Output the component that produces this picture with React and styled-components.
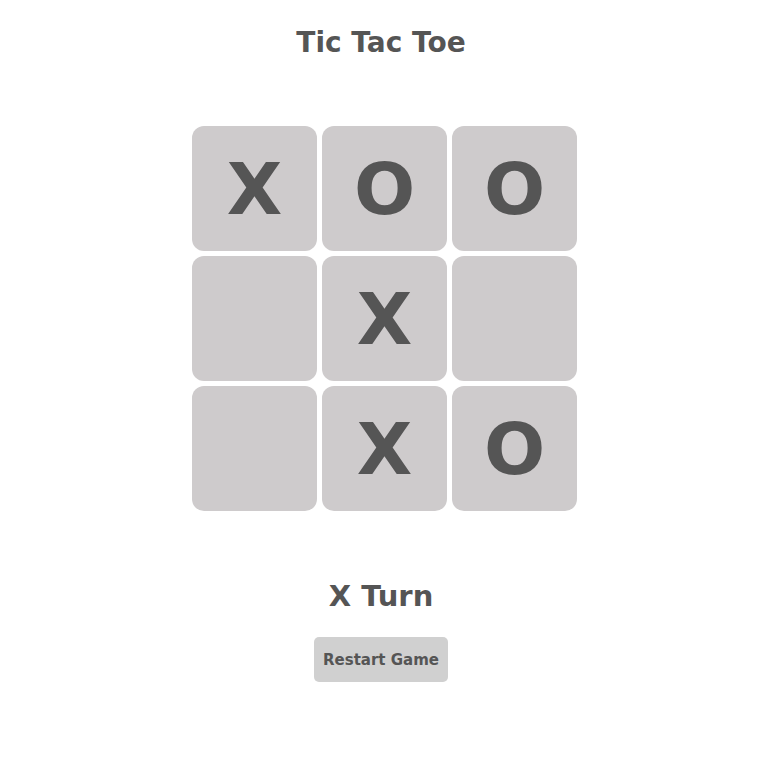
import styled, { createGlobalStyle } from 'styled-components';

const GlobalStyle = createGlobalStyle`
  body {
    margin: 0;
    background: #ffffff;
    font-family: 'DejaVu Sans', 'Liberation Sans', sans-serif;
    color: #555555;
  }
`;

const Page = styled.div`
  display: flex;
  flex-direction: column;
  align-items: center;
  padding: 24px 15px 0 0;
  width: 777px;
  box-sizing: border-box;
`;

const Title = styled.h1`
  margin: 0;
  font-size: 28px;
  font-weight: 700;
  line-height: 38px;
`;

const Board = styled.div`
  display: grid;
  grid-template-columns: repeat(3, 125px);
  grid-auto-rows: 125px;
  gap: 5px;
  margin: 64px 0 0 7px;
`;

const Cell = styled.button`
  border: none;
  padding: 0;
  border-radius: 12px;
  background: #cecbcc;
  color: #555555;
  font-family: 'DejaVu Sans', sans-serif;
  font-weight: 700;
  font-size: 72px;
  line-height: 1;
  display: flex;
  align-items: center;
  justify-content: center;
  cursor: pointer;
`;

const Status = styled.h2`
  margin: 66px 0 0;
  font-size: 29px;
  font-weight: 700;
  line-height: 38px;
`;

const RestartButton = styled.button`
  margin-top: 22px;
  width: 134px;
  height: 45px;
  border: none;
  border-radius: 5px;
  background: #d0d0d0;
  color: #555555;
  font-family: 'DejaVu Sans', sans-serif;
  font-weight: 700;
  font-size: 15px;
  cursor: pointer;
`;

const board = ['X', 'O', 'O', '', 'X', '', '', 'X', 'O'];

export default function App() {
  return (
    <>
      <GlobalStyle />
      <Page>
        <Title>Tic Tac Toe</Title>
        <Board>
          {board.map((v, i) => (
            <Cell key={i}>{v}</Cell>
          ))}
        </Board>
        <Status>X Turn</Status>
        <RestartButton>Restart Game</RestartButton>
      </Page>
    </>
  );
}
